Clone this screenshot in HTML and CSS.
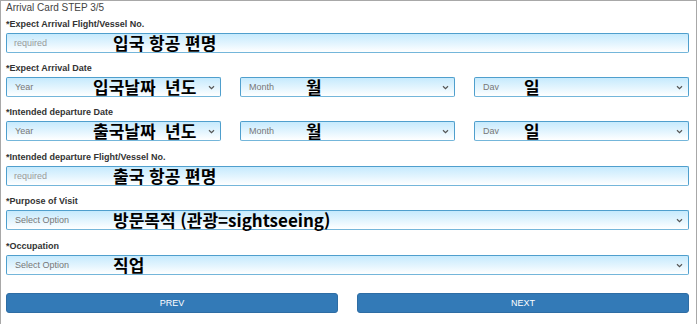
FILE: index.html
```html
<!DOCTYPE html>
<html lang="ko">
<head>
<meta charset="utf-8">
<title>Arrival Card STEP 3/5</title>
<link rel="stylesheet" href="styles.css">
</head>
<body>
<div class="card">
  <div class="title">Arrival Card STEP 3/5</div>

  <div class="group">
    <div class="label">*Expect Arrival Flight/Vessel No.</div>
    <div class="control input">
      <span class="ph ph-req">required</span>
      <span class="note n-wide">입국 항공 편명</span>
    </div>
  </div>

  <div class="group">
    <div class="label">*Expect Arrival Date</div>
    <div class="row3">
      <div class="control select">
        <span class="ph">Year</span>
        <span class="note n-year">입국날짜  년도</span>
        <svg class="chev" width="7" height="5" viewBox="0 0 7 5"><path d="M1 1.2 L3.5 3.6 L6 1.2" fill="none" stroke="#555" stroke-width="1.2"/></svg>
      </div>
      <div class="control select">
        <span class="ph">Month</span>
        <span class="note n-month">월</span>
        <svg class="chev" width="7" height="5" viewBox="0 0 7 5"><path d="M1 1.2 L3.5 3.6 L6 1.2" fill="none" stroke="#555" stroke-width="1.2"/></svg>
      </div>
      <div class="control select">
        <span class="ph">Dav</span>
        <span class="note n-day">일</span>
        <svg class="chev" width="7" height="5" viewBox="0 0 7 5"><path d="M1 1.2 L3.5 3.6 L6 1.2" fill="none" stroke="#555" stroke-width="1.2"/></svg>
      </div>
    </div>
  </div>

  <div class="group">
    <div class="label">*Intended departure Date</div>
    <div class="row3">
      <div class="control select">
        <span class="ph">Year</span>
        <span class="note n-year">출국날짜  년도</span>
        <svg class="chev" width="7" height="5" viewBox="0 0 7 5"><path d="M1 1.2 L3.5 3.6 L6 1.2" fill="none" stroke="#555" stroke-width="1.2"/></svg>
      </div>
      <div class="control select">
        <span class="ph">Month</span>
        <span class="note n-month">월</span>
        <svg class="chev" width="7" height="5" viewBox="0 0 7 5"><path d="M1 1.2 L3.5 3.6 L6 1.2" fill="none" stroke="#555" stroke-width="1.2"/></svg>
      </div>
      <div class="control select">
        <span class="ph">Dav</span>
        <span class="note n-day">일</span>
        <svg class="chev" width="7" height="5" viewBox="0 0 7 5"><path d="M1 1.2 L3.5 3.6 L6 1.2" fill="none" stroke="#555" stroke-width="1.2"/></svg>
      </div>
    </div>
  </div>

  <div class="group">
    <div class="label">*Intended departure Flight/Vessel No.</div>
    <div class="control input">
      <span class="ph ph-req">required</span>
      <span class="note n-wide">출국 항공 편명</span>
    </div>
  </div>

  <div class="group">
    <div class="label">*Purpose of Visit</div>
    <div class="control select">
      <span class="ph">Select Option</span>
      <span class="note n-wide">방문목적 (관광=sightseeing)</span>
      <svg class="chev" width="7" height="5" viewBox="0 0 7 5"><path d="M1 1.2 L3.5 3.6 L6 1.2" fill="none" stroke="#555" stroke-width="1.2"/></svg>
    </div>
  </div>

  <div class="group">
    <div class="label">*Occupation</div>
    <div class="control select">
      <span class="ph">Select Option</span>
      <span class="note n-wide">직업</span>
      <svg class="chev" width="7" height="5" viewBox="0 0 7 5"><path d="M1 1.2 L3.5 3.6 L6 1.2" fill="none" stroke="#555" stroke-width="1.2"/></svg>
    </div>
  </div>

  <div class="buttons">
    <div class="btn">PREV</div>
    <div class="btn">NEXT</div>
  </div>
</div>
</body>
</html>
```

FILE: styles.css
```css
html, body {
  margin: 0;
  padding: 0;
  background: #fff;
}

body {
  font-family: "Liberation Sans", Arial, sans-serif;
}

.card {
  width: 683px;
  height: 323px;
  border: 1px solid #a8a8a8;
  border-bottom: none;
  padding: 0 7px 0 5px;
}

.title {
  font-size: 10px;
  line-height: 14px;
  color: #444;
  margin-top: 0;
  margin-bottom: 3px;
}

.group {
  padding-bottom: 9px;
}

.group:nth-of-type(4),
.group:nth-of-type(6) {
  padding-bottom: 10px;
}

.label {
  font-size: 9px;
  font-weight: bold;
  line-height: 12px;
  color: #333;
  margin-bottom: 3px;
}

.control {
  position: relative;
  box-sizing: border-box;
  height: 20px;
  border: 1px solid #4f9fcd;
  border-bottom-color: #74b6da;
  border-radius: 2px;
  background: linear-gradient(to bottom, #c6eafd 0%, #e4f5fe 55%, #ffffff 100%);
  display: flex;
  align-items: center;
  padding: 0 5px 0 7px;
}

.ph {
  font-size: 9px;
  color: #777;
}

.ph-req {
  color: #9a9a9a;
}

.select .ph {
  padding-left: 1px;
}

.chev {
  margin-left: auto;
  display: block;
}

.note {
  position: absolute;
  top: -2px;
  font-family: "Noto Sans CJK KR", "Noto Sans", sans-serif;
  font-weight: bold;
  font-size: 17px;
  line-height: 22px;
  color: #000;
  white-space: pre;
}

.n-wide { left: 106px; }
.n-year { left: 86px; }
.n-month { left: 65px; }
.n-day { left: 49px; }

.row3 {
  display: grid;
  grid-template-columns: repeat(3, 1fr);
  column-gap: 19px;
}

.buttons {
  display: grid;
  grid-template-columns: 1fr 1fr;
  column-gap: 19px;
  margin-top: 9px;
}

.btn {
  height: 20px;
  box-sizing: border-box;
  background: #337ab7;
  border: 1px solid #2e6da4;
  border-radius: 3px;
  color: #fff;
  font-size: 9px;
  line-height: 18px;
  text-align: center;
}
```
